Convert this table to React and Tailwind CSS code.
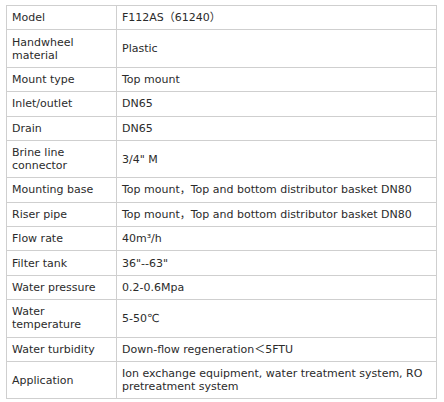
const rows = [
  ["Model", "F112AS（61240）"],
  ["Handwheel material", "Plastic"],
  ["Mount type", "Top mount"],
  ["Inlet/outlet", "DN65"],
  ["Drain", "DN65"],
  ["Brine line connector", "3/4\" M"],
  ["Mounting base", "Top mount，Top and bottom distributor basket DN80"],
  ["Riser pipe", "Top mount，Top and bottom distributor basket DN80"],
  ["Flow rate", "40m³/h"],
  ["Filter tank", "36\"--63\""],
  ["Water pressure", "0.2-0.6Mpa"],
  ["Water temperature", "5-50℃"],
  ["Water turbidity", "Down-flow regeneration＜5FTU"],
  ["Application", "Ion exchange equipment, water treatment system, RO pretreatment system"],
];

export default function App() {
  return (
    <div className="w-[444px] h-[402px] bg-white pt-[5px] pl-[6px] font-['DejaVu_Sans','Noto_Sans_CJK_SC',sans-serif] text-[11px] leading-[13px] text-[#2b2b2b]">
      <div className="w-[431px] border-l border-t border-[#cfcfcf]">
        {rows.map(([label, value]) => (
          <div key={label} className="grid grid-cols-[110px_1fr]">
            <div className="flex items-center border-r border-b border-[#cfcfcf] pl-[5px] pr-[2px] py-[5.2px]">
              {label}
            </div>
            <div className="flex items-center border-r border-b border-[#cfcfcf] pl-[5px] pr-[2px] py-[5.2px]">
              {value}
            </div>
          </div>
        ))}
      </div>
    </div>
  );
}
